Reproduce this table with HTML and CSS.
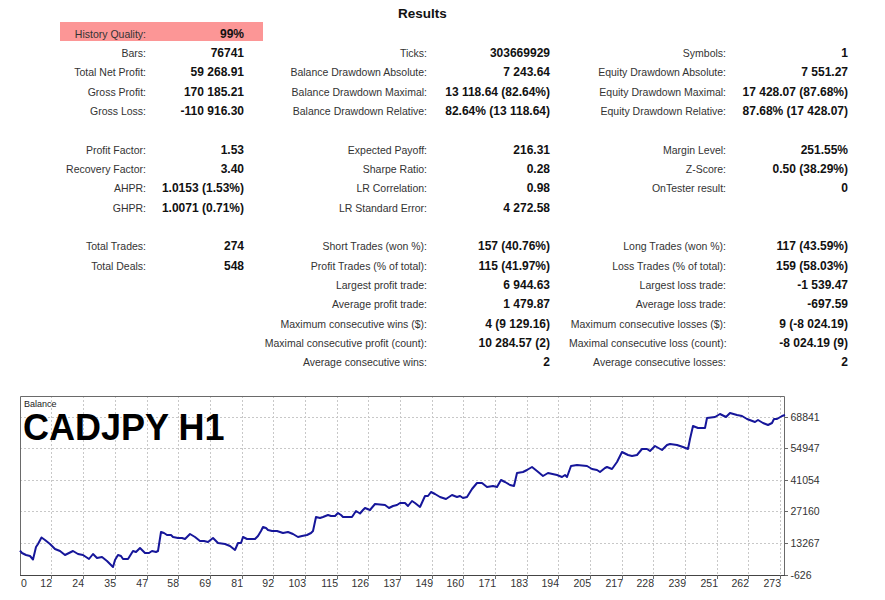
FILE: index.html
```html
<!DOCTYPE html>
<html>
<head>
<meta charset="utf-8">
<title>Results</title>
<link rel="stylesheet" href="styles.css">
</head>
<body>
<div class="report">
  <h1 class="title">Results</h1>
  <div class="stats">
    <div class="l hq">History Quality:</div><div class="v hq">99%</div><div></div><div></div><div></div><div></div>
    <div class="l">Bars:</div><div class="v">76741</div><div class="l">Ticks:</div><div class="v">303669929</div><div class="l">Symbols:</div><div class="v">1</div>
    <div class="l">Total Net Profit:</div><div class="v">59 268.91</div><div class="l">Balance Drawdown Absolute:</div><div class="v">7 243.64</div><div class="l">Equity Drawdown Absolute:</div><div class="v">7 551.27</div>
    <div class="l">Gross Profit:</div><div class="v">170 185.21</div><div class="l">Balance Drawdown Maximal:</div><div class="v">13 118.64 (82.64%)</div><div class="l">Equity Drawdown Maximal:</div><div class="v">17 428.07 (87.68%)</div>
    <div class="l">Gross Loss:</div><div class="v">-110 916.30</div><div class="l">Balance Drawdown Relative:</div><div class="v">82.64% (13 118.64)</div><div class="l">Equity Drawdown Relative:</div><div class="v">87.68% (17 428.07)</div>
    <div class="spacer"></div>
    <div class="l">Profit Factor:</div><div class="v">1.53</div><div class="l">Expected Payoff:</div><div class="v">216.31</div><div class="l">Margin Level:</div><div class="v">251.55%</div>
    <div class="l">Recovery Factor:</div><div class="v">3.40</div><div class="l">Sharpe Ratio:</div><div class="v">0.28</div><div class="l">Z-Score:</div><div class="v">0.50 (38.29%)</div>
    <div class="l">AHPR:</div><div class="v">1.0153 (1.53%)</div><div class="l">LR Correlation:</div><div class="v">0.98</div><div class="l">OnTester result:</div><div class="v">0</div>
    <div class="l">GHPR:</div><div class="v">1.0071 (0.71%)</div><div class="l">LR Standard Error:</div><div class="v">4 272.58</div><div></div><div></div>
    <div class="spacer"></div>
    <div class="l">Total Trades:</div><div class="v">274</div><div class="l">Short Trades (won %):</div><div class="v">157 (40.76%)</div><div class="l">Long Trades (won %):</div><div class="v">117 (43.59%)</div>
    <div class="l">Total Deals:</div><div class="v">548</div><div class="l">Profit Trades (% of total):</div><div class="v">115 (41.97%)</div><div class="l">Loss Trades (% of total):</div><div class="v">159 (58.03%)</div>
    <div></div><div></div><div class="l">Largest profit trade:</div><div class="v">6 944.63</div><div class="l">Largest loss trade:</div><div class="v">-1 539.47</div>
    <div></div><div></div><div class="l">Average profit trade:</div><div class="v">1 479.87</div><div class="l">Average loss trade:</div><div class="v">-697.59</div>
    <div></div><div></div><div class="l">Maximum consecutive wins ($):</div><div class="v">4 (9 129.16)</div><div class="l">Maximum consecutive losses ($):</div><div class="v">9 (-8 024.19)</div>
    <div></div><div></div><div class="l">Maximal consecutive profit (count):</div><div class="v">10 284.57 (2)</div><div class="l">Maximal consecutive loss (count):</div><div class="v">-8 024.19 (9)</div>
    <div></div><div></div><div class="l">Average consecutive wins:</div><div class="v">2</div><div class="l">Average consecutive losses:</div><div class="v">2</div>
  </div>
  <div class="chart">
    <svg class="chart-svg" width="885" height="234" viewBox="0 366 885 234" xmlns="http://www.w3.org/2000/svg">
      <g class="grid" stroke="#c8c8c8" stroke-width="1" stroke-dasharray="2 2" fill="none">
        <path d="M20 539.5H785M20 507.5H785M20 476.5H785M20 444.5H785M20 413.5H785"/>
        <path d="M51.5 392V571M83.5 392V571M115.5 392V571M147.5 392V571M178.5 392V571M210.5 392V571M242.5 392V571M273.5 392V571M305.5 392V571M337.5 392V571M368.5 392V571M400.5 392V571M432.5 392V571M463.5 392V571M495.5 392V571M527.5 392V571M558.5 392V571M590.5 392V571M622.5 392V571M653.5 392V571M685.5 392V571M717.5 392V571M748.5 392V571M780.5 392V571"/>
      </g>
      <g stroke="#6a6a6a" stroke-width="1" fill="none">
        <path d="M20.5 571V392.5H784.5V571"/>
        <path d="M20 571.5H785" stroke="#444"/>
        <path d="M51.5 571V575M83.5 571V575M115.5 571V575M147.5 571V575M178.5 571V575M210.5 571V575M242.5 571V575M273.5 571V575M305.5 571V575M337.5 571V575M368.5 571V575M400.5 571V575M432.5 571V575M463.5 571V575M495.5 571V575M527.5 571V575M558.5 571V575M590.5 571V575M622.5 571V575M653.5 571V575M685.5 571V575M717.5 571V575M748.5 571V575M780.5 571V575"/>
        <path d="M785 539.5H788M785 507.5H788M785 476.5H788M785 444.5H788M785 413.5H788M785 571.5H788"/>
      </g>
      <polyline class="balance" fill="none" stroke="#16169a" stroke-width="2" stroke-linejoin="round" points="20,546.7 22,549 26,551 30,552 33,555.5 36,543 38,540 41.5,533.5 45,536 50,540 55,545 60,547 65,551 69,549 73,547 78,550 83,551 86,553 89,555 93,550 97,554 102,553 107,557 113,563 115,556 118,551 121,552 123,555 128,555 133,547 136,548 140,544 145,549 149,549 152,547 156,548 158,547 161,528 164,529 167,531 171,531 173,533 178,534 182,534 185,535 190,530 195,533 200,537 204,537 208,538 213,534 218,539 225,540 230,542 235,546 238,539 241,539 243,533 247,535 250,535 255,535 258,532 261,527 263,523 266,524 268,526 272,527 277,527 280,528 283,529 288,528 293,530 298,533 302,532 307,531 311,529 313,527 316,513 320,514 323,513 328,511 331,512 335,512 338,509 341,511 343,513 348,513 352,513 356,507 360,509.5 363,506 365,504 370,506 375,500 380,500.5 385,501 389,504 393,502 397,501 400,499 405,499 408,502 412,497 415,499 420,503 425,492 428,492 431,488 435,490 440,493 446,495 452,491 457,493 460,492 463,494 467,493 472,485 477,479 482,479 487,483 493,482 497,483 501,476 505,478 510,481 514,482 517,469 523,468 527,466 532,463 537,467 543,472 548,469 557,471 562,473 565,471 567,473 571,462 577,461 587,462 592,465 597,466 600,468 605,464 607,463 612,465 617,458 622,448 628,451 632,452 637,451 642,445 647,445 650,447 655,442 662,446 667,441 670,440 677,441 683,443 688,445 690,435 693,422 698,424 705,424 707,414 715,413 720,410 726,413 730,409 737,411 742,412 747,415 755,418 758,416 763,419 768,421 772,419 774,415 777,415 782,412 785,411"/>
      <text class="series" x="24" y="403">Balance</text>
      <text class="symbol" x="23" y="435.5">CADJPY H1</text>
      <g class="ylab">
        <text x="790.5" y="416.5">68841</text>
        <text x="790.5" y="448">54947</text>
        <text x="790.5" y="479.5">41054</text>
        <text x="790.5" y="511">27160</text>
        <text x="790.5" y="543">13267</text>
        <text x="790.5" y="574.5">-626</text>
      </g>
      <g class="xlab">
        <text x="21" y="583" class="first">0</text>
        <text x="52" y="583">12</text>
        <text x="84" y="583">24</text>
        <text x="116" y="583">35</text>
        <text x="148" y="583">47</text>
        <text x="179" y="583">58</text>
        <text x="211" y="583">69</text>
        <text x="243" y="583">81</text>
        <text x="274" y="583">92</text>
        <text x="306" y="583">103</text>
        <text x="338" y="583">115</text>
        <text x="369" y="583">126</text>
        <text x="401" y="583">137</text>
        <text x="433" y="583">149</text>
        <text x="464" y="583">160</text>
        <text x="496" y="583">171</text>
        <text x="528" y="583">183</text>
        <text x="559" y="583">194</text>
        <text x="591" y="583">205</text>
        <text x="623" y="583">217</text>
        <text x="654" y="583">228</text>
        <text x="686" y="583">239</text>
        <text x="718" y="583">251</text>
        <text x="749" y="583">262</text>
        <text x="781" y="583">273</text>
      </g>
    </svg>
  </div>
</div>
</body>
</html>
```
FILE: styles.css
```css
html, body {
  margin: 0;
  padding: 0;
  background: #ffffff;
}
body {
  width: 885px;
  height: 600px;
  overflow: hidden;
  font-family: "Liberation Sans", Arial, sans-serif;
}
.report {
  display: flex;
  flex-direction: column;
}
.title {
  margin: 0;
  width: 845px;
  height: 22px;
  box-sizing: border-box;
  padding-top: 6px;
  line-height: 16px;
  font-size: 13.5px;
  font-weight: bold;
  text-align: center;
  color: #111;
}
.stats {
  display: grid;
  margin-left: 60px;
  grid-template-columns: 90px 113px 168px 138px 161px 137px;
  grid-auto-rows: 19.35px;
  white-space: nowrap;
}
.stats > div {
  box-sizing: border-box;
  padding-top: 5.5px;
  line-height: 13.85px;
  text-align: right;
}
.l {
  padding-right: 4px;
  font-size: 10.5px;
  color: #333333;
}
.v {
  padding-right: 19px;
  font-size: 12px;
  font-weight: bold;
  color: #111;
}
.hq {
  background: #fc9696;
}
.stats > .spacer {
  grid-column: 1 / -1;
  height: 17.2px;
  padding: 0;
}
.chart {
  height: 234px;
}
.chart-svg {
  display: block;
}
.series {
  font-family: "Liberation Sans", Arial, sans-serif;
  font-size: 9px;
  fill: #222;
}
.symbol {
  font-family: "Liberation Sans", Arial, sans-serif;
  font-size: 36px;
  font-weight: bold;
  fill: #000;
}
.ylab text, .xlab text {
  font-family: "Liberation Sans", Arial, sans-serif;
  font-size: 10.5px;
  fill: #333;
}
.xlab text {
  text-anchor: end;
}
.xlab text.first {
  text-anchor: start;
}
```
